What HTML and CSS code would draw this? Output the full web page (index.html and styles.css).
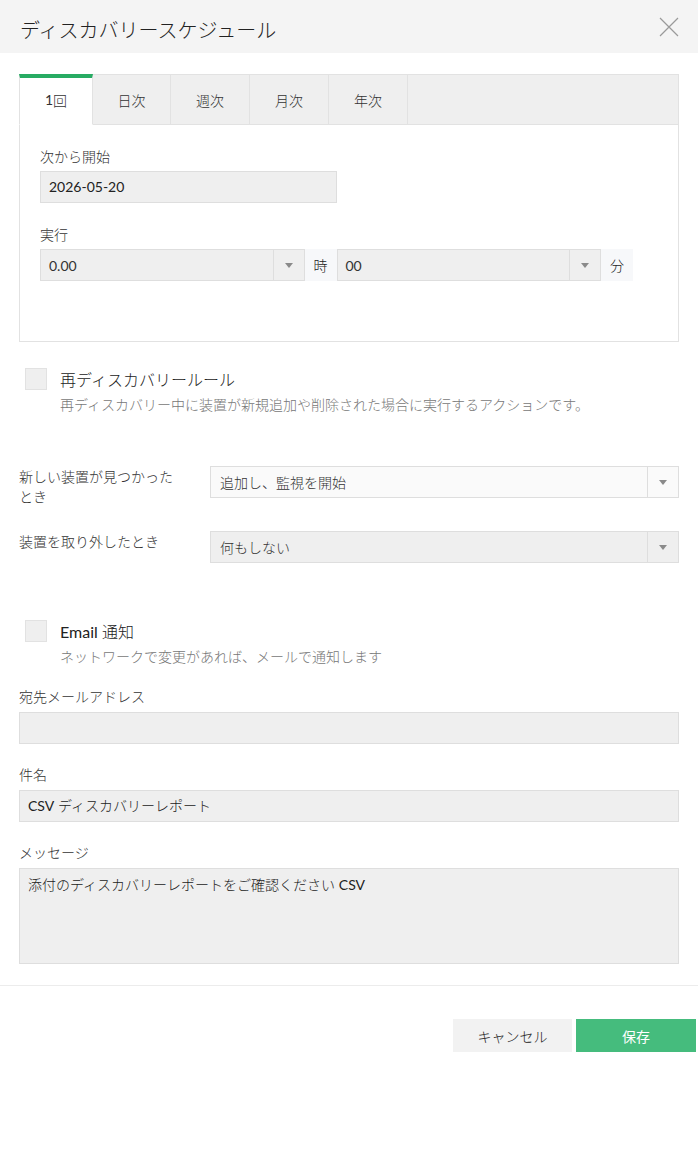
FILE: index.html
```html
<!DOCTYPE html>
<html lang="ja">
<head>
    <meta charset="UTF-8">
    <meta name="viewport" content="width=device-width, initial-scale=1.0">
    <title>ディスカバリースケジュール</title>
    <link rel="stylesheet" href="styles.css">
</head>
<body>
    <div class="dialog">
        <div class="header">
            <h1>ディスカバリースケジュール</h1>
            <svg class="close" width="20" height="20" viewBox="0 0 20 20"><path d="M1 1L19 19M19 1L1 19" stroke="#9a9a9a" stroke-width="1.2" fill="none"/></svg>
        </div>
        <div class="content">
            <div class="tabs">
                <div class="tab-bar">
                    <div class="tab active"><span class="lt">1</span>回</div>
                    <div class="tab">日次</div>
                    <div class="tab">週次</div>
                    <div class="tab">月次</div>
                    <div class="tab">年次</div>
                    <div class="tab-rest"></div>
                </div>
                <div class="tab-panel">
                    <label class="field-label">次から開始</label>
                    <div class="input date-input lt">2026-05-20</div>
                    <label class="field-label spaced">実行</label>
                    <div class="time-row">
                        <div class="select time-select"><span class="lt">0.00</span><span class="arrow"></span></div>
                        <div class="unit">時</div>
                        <div class="select time-select"><span class="lt">00</span><span class="arrow"></span></div>
                        <div class="unit">分</div>
                    </div>
                </div>
            </div>

            <div class="check-block rediscovery">
                <div class="check-row">
                    <span class="checkbox"></span>
                    <span class="check-title">再ディスカバリールール</span>
                </div>
                <p class="check-desc">再ディスカバリー中に装置が新規追加や削除された場合に実行するアクションです。</p>
            </div>

            <div class="rule-row first">
                <div class="rule-label">新しい装置が見つかったとき</div>
                <div class="select rule-select light"><span>追加し、監視を開始</span><span class="arrow"></span></div>
            </div>
            <div class="rule-row">
                <div class="rule-label">装置を取り外したとき</div>
                <div class="select rule-select"><span>何もしない</span><span class="arrow"></span></div>
            </div>

            <div class="check-block email">
                <div class="check-row">
                    <span class="checkbox"></span>
                    <span class="check-title"><span class="lt">Email</span> 通知</span>
                </div>
                <p class="check-desc">ネットワークで変更があれば、メールで通知します</p>
            </div>

            <label class="field-label">宛先メールアドレス</label>
            <div class="input wide"></div>
            <label class="field-label spaced">件名</label>
            <div class="input wide"><span class="lt">CSV</span> ディスカバリーレポート</div>
            <label class="field-label spaced">メッセージ</label>
            <div class="input wide textarea">添付のディスカバリーレポートをご確認ください <span class="lt">CSV</span></div>
        </div>
        <div class="footer">
            <button class="btn cancel">キャンセル</button>
            <button class="btn save">保存</button>
        </div>
    </div>
</body>
</html>
```

FILE: styles.css
```css
body { margin: 0; background: #fff; font-family: Lato, "Noto Sans CJK JP", sans-serif; font-size: 14px; font-weight: 300; color: #333; }
/* latin runs keep the regular weight, the kana/kanji stay light */
.lt { font-weight: 400; }
.header { box-sizing: border-box; height: 53px; background: #f4f4f4; display: flex; align-items: center; justify-content: space-between; padding: 6px 19px 0 20px; }
.header h1 { margin: 0; font-size: 20px; font-weight: 300; color: #222; }
.close { margin-top: -6px; }
.content { padding: 21px 19px 21px 19px; border-bottom: 1px solid #ececec; }

.tabs { border: 1px solid #e2e2e2; }
.tab-bar { display: flex; height: 51px; background: #efefef; margin: -1px -1px 0 -1px; }
.tab { box-sizing: border-box; width: 79px; display: flex; align-items: center; justify-content: center; border-top: 1px solid #e2e2e2; border-right: 1px solid #e2e2e2; border-bottom: 1px solid #e2e2e2; color: #333; }
.tab.active { width: 74px; background: #fff; border-top: 4px solid #27ab63; border-bottom: 1px solid #fff; border-left: 1px solid #e2e2e2; padding-bottom: 3px; }
.tab.active + .tab { width: 78px; }
.tab-rest { flex: 1; border-top: 1px solid #e2e2e2; border-right: 1px solid #e2e2e2; border-bottom: 1px solid #e2e2e2; }
.tab-panel { padding: 22px 20px 60px 20px; }

.field-label { display: block; line-height: 20px; margin-bottom: 5px; color: #333; }
.field-label.spaced { margin-top: 21px; }
.tab-panel .field-label { margin-bottom: 4px; }
.tab-panel .field-label.spaced { margin-top: 22px; }

.input { box-sizing: border-box; height: 32px; background: #efefef; border: 1px solid #dedede; padding: 0 8px; line-height: 30px; color: #222; }
.date-input { width: 297px; }
.input.wide { width: 100%; }
.input.textarea { height: 96px; line-height: 20px; padding-top: 6px; }

.time-row { display: flex; width: 593px; }
.select { box-sizing: border-box; height: 32px; display: flex; align-items: center; background: #efefef; border: 1px solid #dedede; color: #333; }
.select span:first-child { flex: 1; padding-left: 8px; }
.select .arrow { width: 30px; align-self: stretch; border-left: 1px solid #dedede; position: relative; }
.select .arrow::after { content: ""; position: absolute; left: 11px; top: 13px; border-left: 4px solid transparent; border-right: 4px solid transparent; border-top: 5px solid #8a8a8a; }
.time-select { width: 265px; }
.unit { width: 32px; height: 32px; display: flex; align-items: center; justify-content: center; background: #f7f8fa; color: #222; }

.check-block { padding-left: 6px; }
.check-row { display: flex; align-items: center; height: 22px; }
.checkbox { box-sizing: border-box; width: 22px; height: 22px; background: #efefef; border: 1px solid #e2e2e2; margin-right: 13px; }
.check-title { font-size: 16px; color: #222; }
.check-desc { margin: 5px 0 0 35px; line-height: 20px; color: #777; }
.rediscovery { margin-top: 26px; }
.email { margin-top: 57px; margin-bottom: 20px; }

.rule-row { display: flex; margin-top: 24px; }
.rule-row.first { margin-top: 51px; }
.rule-label { width: 160px; margin-right: 31px; line-height: 20px; padding-top: 1px; color: #333; }
.rule-select { flex: 1; }
.rule-select span:first-child { padding-left: 9px; }
.rule-select.light { background: #fafafa; }

.footer { display: flex; justify-content: flex-end; gap: 4px; padding: 33px 2px 0 0; }
.btn { height: 33px; border: none; font-family: inherit; font-size: 14px; font-weight: 300; cursor: pointer; }
.btn.cancel { width: 119px; background: #f2f2f2; color: #222; }
.btn.save { width: 120px; background: #45bc7d; color: #fff; font-weight: 400; }
```
